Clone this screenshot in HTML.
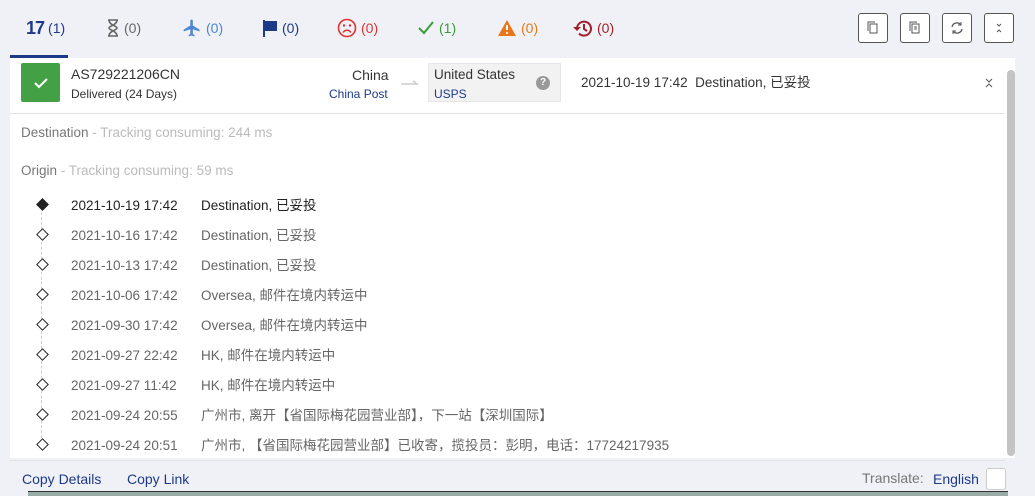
<!DOCTYPE html><html><head><meta charset="utf-8"><style>
body{margin:0;width:1035px;height:495px;background:#f0f1f6;font-family:"Liberation Sans","Noto Sans CJK SC",sans-serif;position:relative;overflow:hidden;font-size:13px}
.a{position:absolute;white-space:nowrap;line-height:16px}
.tab{position:absolute;top:18px;font-size:14px;display:flex;align-items:center;gap:4px;line-height:20px}
.btn{position:absolute;top:13px;width:30px;height:30px;border:1px solid #555;border-radius:3px;background:#fff;box-sizing:border-box}
.row .d{position:absolute;left:71px;color:#666;font-size:13.5px}
.row .t{position:absolute;left:201px;color:#666;font-size:13.5px}
.dia{position:absolute;left:38px;width:7px;height:7px;border:1.3px solid #222;transform:rotate(45deg);background:#fff}
</style></head><body>
<div class="tab" style="left:26px"><b style="font-size:18px;color:#1d3a8a;letter-spacing:-1px">17</b><span style="color:#1d3a8a">(1)</span></div>
<div style="position:absolute;left:10px;top:55px;width:58px;height:3px;background:#1d3a8a"></div>
<div class="tab" style="left:106px;color:#666"><svg width="14" height="18"><path d="M2 1h10M2 17h10M3 1c0 5 8 6 8 8s-8 3-8 8M11 1c0 5-8 6-8 8s8 3 8 8" stroke="#666" fill="none" stroke-width="1.6"/></svg>(0)</div>
<div class="tab" style="left:182px;color:#4a86d4"><svg width="20" height="20" viewBox="0 0 24 24"><path fill="#4a86d4" d="M21 16v-2l-8-5V3.5a1.5 1.5 0 0 0-3 0V9l-8 5v2l8-2.5V19l-2 1.5V22l3.5-1 3.5 1v-1.5L13 19v-5.5z"/></svg>(0)</div>
<div class="tab" style="left:262px;color:#1d3a8a"><svg width="16" height="18"><path d="M2 1v17" stroke="#1d3a8a" stroke-width="2"/><path d="M3 2h12v10H3z" fill="#1d3a8a"/></svg>(0)</div>
<div class="tab" style="left:337px;color:#d33"><svg width="20" height="20"><circle cx="10" cy="10" r="8.5" fill="none" stroke="#d33" stroke-width="1.6"/><circle cx="7" cy="7.5" r="1.2" fill="#d33"/><circle cx="13" cy="7.5" r="1.2" fill="#d33"/><path d="M6 14.5c2-3 6-3 8 0" stroke="#d33" fill="none" stroke-width="1.5"/></svg>(0)</div>
<div class="tab" style="left:417px;color:#3a9a3a"><svg width="18" height="16"><path d="M2 8l5 5L16 2" stroke="#3a9a3a" fill="none" stroke-width="2"/></svg>(1)</div>
<div class="tab" style="left:497px;color:#e07a1a"><svg width="20" height="18"><path d="M10 1L19 17H1z" fill="#e8771c"/><path d="M10 6v5" stroke="#fff" stroke-width="2"/><circle cx="10" cy="14" r="1.1" fill="#fff"/></svg>(0)</div>
<div class="tab" style="left:573px;color:#a0202a"><svg width="20" height="19"><path d="M4 9.5a7 7 0 1 1 2 5" stroke="#a0202a" fill="none" stroke-width="2"/><path d="M0 8l4 4 4-4z" fill="#a0202a"/><path d="M11 5v5l3 2" stroke="#a0202a" fill="none" stroke-width="2"/></svg>(0)</div>
<div class="btn" style="left:858px"><svg width="28" height="28"><rect x="11" y="10" width="7" height="9" fill="none" stroke="#555"/><path d="M9 17V8h7" fill="none" stroke="#555"/></svg></div>
<div class="btn" style="left:900px"><svg width="28" height="28"><rect x="11" y="10" width="7" height="9" fill="none" stroke="#555"/><path d="M9 17V8h7M13 13h3M13 15h3" fill="none" stroke="#555"/></svg></div>
<div class="btn" style="left:942px"><svg width="28" height="28"><path d="M9 13a5 5 0 0 1 9-2M19 15a5 5 0 0 1-9 2" fill="none" stroke="#555" stroke-width="1.3"/><path d="M18 8v3h-3M10 20v-3h3" fill="none" stroke="#555"/></svg></div>
<div class="btn" style="left:984px"><svg width="28" height="28"><path d="M12 10l2 2 2-2M12 18l2-2 2 2" fill="none" stroke="#555"/></svg></div>
<div style="position:absolute;left:10px;top:58px;width:1005px;height:400px;background:#fff"></div>
<div style="position:absolute;left:10px;top:113px;width:995px;height:1px;background:#e3e3e3"></div>
<div style="position:absolute;left:1007px;top:70px;width:8px;height:386px;background:#c4c4c4;border-radius:4px"></div>
<div style="position:absolute;left:21px;top:63px;width:39px;height:39px;background:#44a044;border-radius:2px"><svg width="39" height="39"><path d="M14 20l4 4 8-8" stroke="#fff" fill="none" stroke-width="2"/></svg></div>
<div class="a" style="left:71px;top:66px;color:#333;font-size:14px">AS729221206CN</div>
<div class="a" style="left:71px;top:86px;color:#333;font-size:12px">Delivered (24 Days)</div>
<div class="a" style="left:352px;top:67px;color:#333;font-size:14px">China</div>
<div class="a" style="left:329px;top:86px;color:#1d3a8a;font-size:12px">China Post</div>
<svg class="a" style="left:400px;top:79px" width="20" height="8"><path d="M1 5h16l-4-3" stroke="#ccc" fill="none" stroke-width="1.5"/></svg>
<div style="position:absolute;left:428px;top:63px;width:133px;height:39px;background:#f2f2f2;border:1px solid #e6e6e6;box-sizing:border-box"></div>
<div class="a" style="left:434px;top:67px;color:#333;font-size:13.5px">United States</div>
<div class="a" style="left:434px;top:86px;color:#1d3a8a;font-size:12px">USPS</div>
<div class="a" style="left:536px;top:76px;width:14px;height:14px;border-radius:50%;background:#999;color:#fff;font-size:10px;text-align:center;line-height:14px;font-weight:bold">?</div>
<div class="a" style="left:581px;top:75px;color:#333;font-size:13.5px">2021-10-19 17:42&nbsp; Destination, 已妥投</div>
<svg class="a" style="left:984px;top:77px" width="10" height="12"><path d="M2 2l3 3 3-3M2 10l3-3 3 3" stroke="#555" fill="none"/></svg>
<div class="a" style="left:21px;top:125px;color:#777;font-size:13.5px">Destination <span style="color:#bbb">- Tracking consuming: 244 ms</span></div>
<div class="a" style="left:21px;top:163px;color:#777;font-size:13.5px">Origin <span style="color:#bbb">- Tracking consuming: 59 ms</span></div>
<div style="position:absolute;left:41px;top:212px;width:0;height:236px;border-left:1px dashed #ccc"></div>
<div class="row">
<div class="dia" style="top:200px;background:#222"></div><div class="a d" style="top:198px;color:#222">2021-10-19 17:42</div><div class="a t" style="top:198px;color:#222">Destination, 已妥投</div>
<div class="dia" style="top:230px"></div><div class="a d" style="top:228px">2021-10-16 17:42</div><div class="a t" style="top:228px">Destination, 已妥投</div>
<div class="dia" style="top:260px"></div><div class="a d" style="top:258px">2021-10-13 17:42</div><div class="a t" style="top:258px">Destination, 已妥投</div>
<div class="dia" style="top:290px"></div><div class="a d" style="top:288px">2021-10-06 17:42</div><div class="a t" style="top:288px">Oversea, 邮件在境内转运中</div>
<div class="dia" style="top:320px"></div><div class="a d" style="top:318px">2021-09-30 17:42</div><div class="a t" style="top:318px">Oversea, 邮件在境内转运中</div>
<div class="dia" style="top:350px"></div><div class="a d" style="top:348px">2021-09-27 22:42</div><div class="a t" style="top:348px">HK, 邮件在境内转运中</div>
<div class="dia" style="top:380px"></div><div class="a d" style="top:378px">2021-09-27 11:42</div><div class="a t" style="top:378px">HK, 邮件在境内转运中</div>
<div class="dia" style="top:410px"></div><div class="a d" style="top:408px">2021-09-24 20:55</div><div class="a t" style="top:408px">广州市, 离开【省国际梅花园营业部】，下一站【深圳国际】</div>
<div class="dia" style="top:440px"></div><div class="a d" style="top:438px">2021-09-24 20:51</div><div class="a t" style="top:438px">广州市, 【省国际梅花园营业部】已收寄，揽投员：彭明，电话：17724217935</div>
</div>
<div style="position:absolute;left:10px;top:460px;width:995px;height:1px;background:#e3e3e3"></div>
<div class="a" style="left:22px;top:471px;color:#1d3a8a;font-size:14px">Copy Details</div>
<div class="a" style="left:127px;top:471px;color:#1d3a8a;font-size:14px">Copy Link</div>
<div class="a" style="left:862px;top:470px;color:#777;font-size:14px">Translate:</div>
<div class="a" style="left:933px;top:471px;color:#1d3a8a;font-size:14px">English</div>
<div class="a" style="left:986px;top:468px;width:18px;height:20px;border:1px solid #ccc;border-radius:3px;background:#fff"></div>
<div class="a" style="left:28px;top:491px;width:980px;height:4px;background:#9aaca8;border-top:1px solid #333"></div>
</body></html>
